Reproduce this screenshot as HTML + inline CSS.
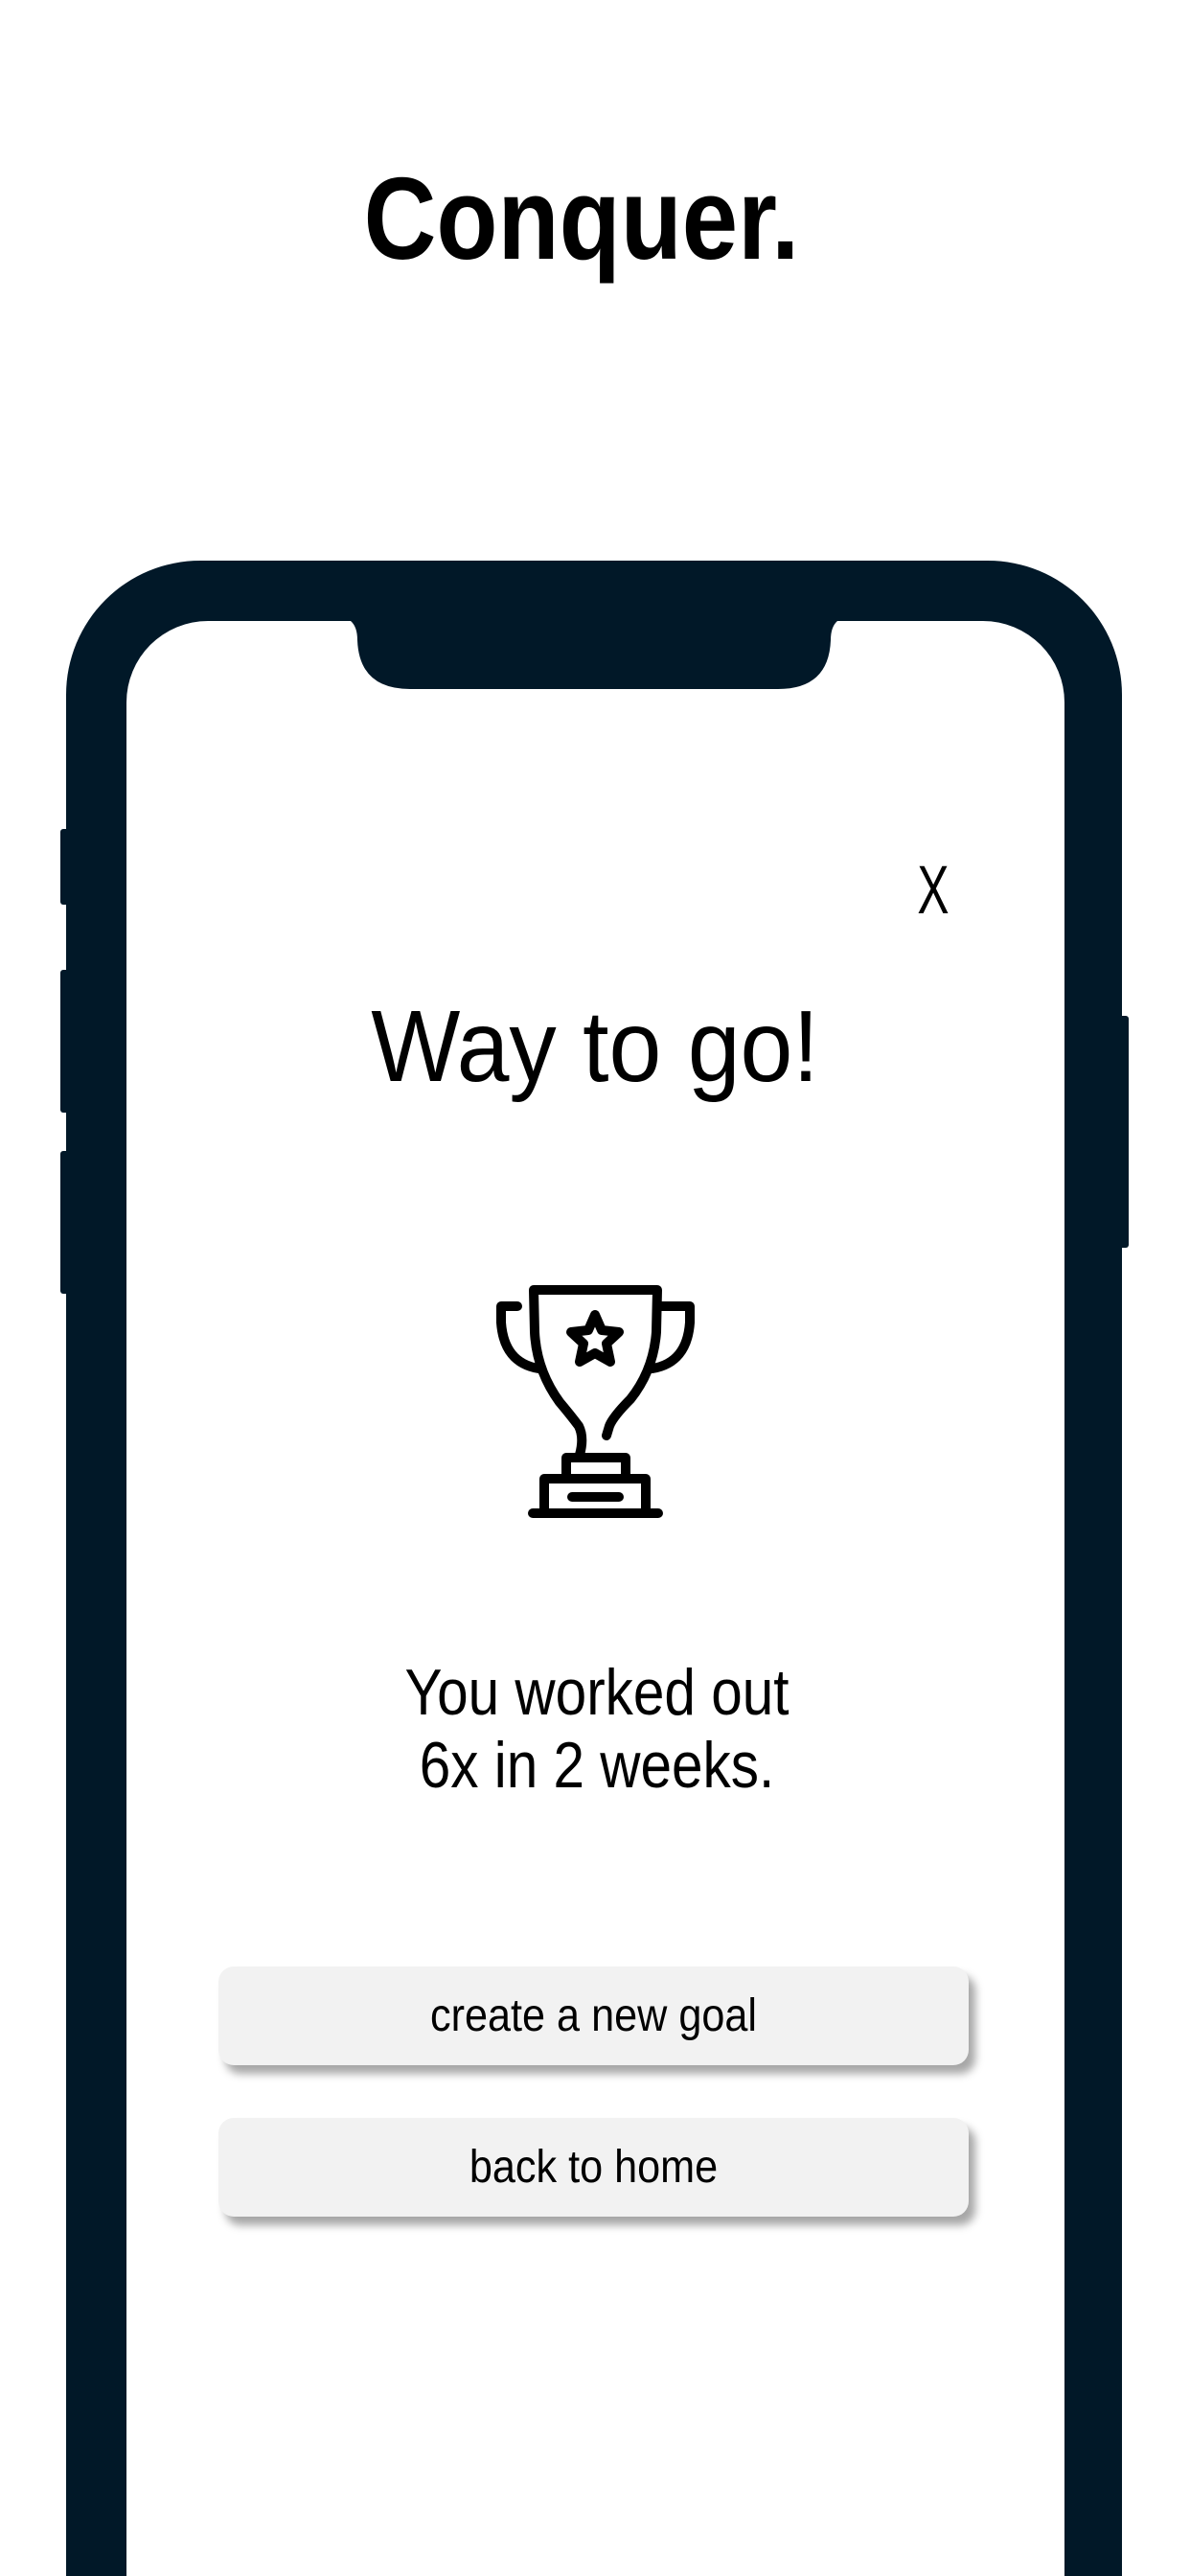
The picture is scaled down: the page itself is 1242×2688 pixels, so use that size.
<!DOCTYPE html>
<html><head><meta charset="utf-8"><style>
html,body{margin:0;padding:0;background:#fff;width:1242px;height:2688px;overflow:hidden;}
body{position:relative;font-family:"Liberation Sans",sans-serif;color:#000;}
.a{position:absolute;}
.t{position:absolute;left:0;width:1242px;text-align:center;white-space:nowrap;}
.btn{position:absolute;left:228px;width:783px;height:103px;background:#f2f2f2;border-radius:16px;box-shadow:7px 9px 9px rgba(0,0,0,0.35);}
.btn span{display:block;text-align:center;font-size:48px;line-height:103px;transform:scaleX(0.9);}
</style></head><body>
<div class="t" style="top:158px;font-size:122px;font-weight:bold;line-height:140px;transform:scaleX(0.86);left:-14px;">Conquer.</div>

<div class="a" style="left:63px;top:865px;width:10px;height:79px;background:#011828;border-radius:3px;"></div>
<div class="a" style="left:63px;top:1012px;width:10px;height:149px;background:#011828;border-radius:3px;"></div>
<div class="a" style="left:63px;top:1201px;width:10px;height:149px;background:#011828;border-radius:3px;"></div>
<div class="a" style="left:1166px;top:1060px;width:12px;height:242px;background:#011828;border-radius:3px;"></div>

<div class="a" style="left:69px;top:585px;width:1102px;height:2103px;background:#011828;border-radius:140px 140px 0 0;"></div>
<div class="a" style="left:132px;top:648px;width:979px;height:2040px;background:#fff;border-radius:85px 85px 0 0;"></div>
<svg class="a" style="left:0;top:0" width="1242" height="760">
<path d="M360 646 L366 648 Q373 654 373 668 Q375 719 428 719 L812 719 Q865 719 867 668 Q867 654 874 648 L880 646 Z" fill="#011828"/>
</svg>

<div class="a" style="left:950px;top:890px;width:48px;font-size:71px;line-height:80px;text-align:center;transform:scaleX(0.7);">X</div>
<div class="t" style="top:1032px;font-size:106px;line-height:120px;transform:scaleX(0.93);">Way to go!</div>

<svg class="a" style="left:480px;top:1300px" width="300" height="300" viewBox="0 0 300 300" fill="none" stroke="#000" stroke-width="10" stroke-linecap="round" stroke-linejoin="round">
<path d="M125 218 Q130 200 124 188 Q115 176 104 163 Q80 130 78 90 L77 46 L206 46 L205 90 Q202 130 178 160 Q160 178 156 188 L153 198"/>
<path d="M60 63 L43 63 L43 80 Q46 122 82 128"/>
<path d="M206 63 L240 63 L240 80 Q237 122 201 128"/>
<path d="M141 72 L148 88 L166 90 L153 102 L157 121 L141 112 L125 121 L129 102 L116 90 L134 88 Z"/>
<path d="M111 238 L111 221 L173 221 L173 238"/>
<path d="M88 278 L88 243 L194 243 L194 278"/>
<path d="M76 279 L207 279"/>
<path d="M117 262 L166 262"/>
</svg>

<div class="t" style="top:1728px;font-size:68px;line-height:76px;transform:scaleX(0.86);left:2px;">You worked out<br>6x in 2 weeks.</div>

<div class="btn" style="top:2052px;"><span>create a new goal</span></div>
<div class="btn" style="top:2210px;"><span>back to home</span></div>
</body></html>
